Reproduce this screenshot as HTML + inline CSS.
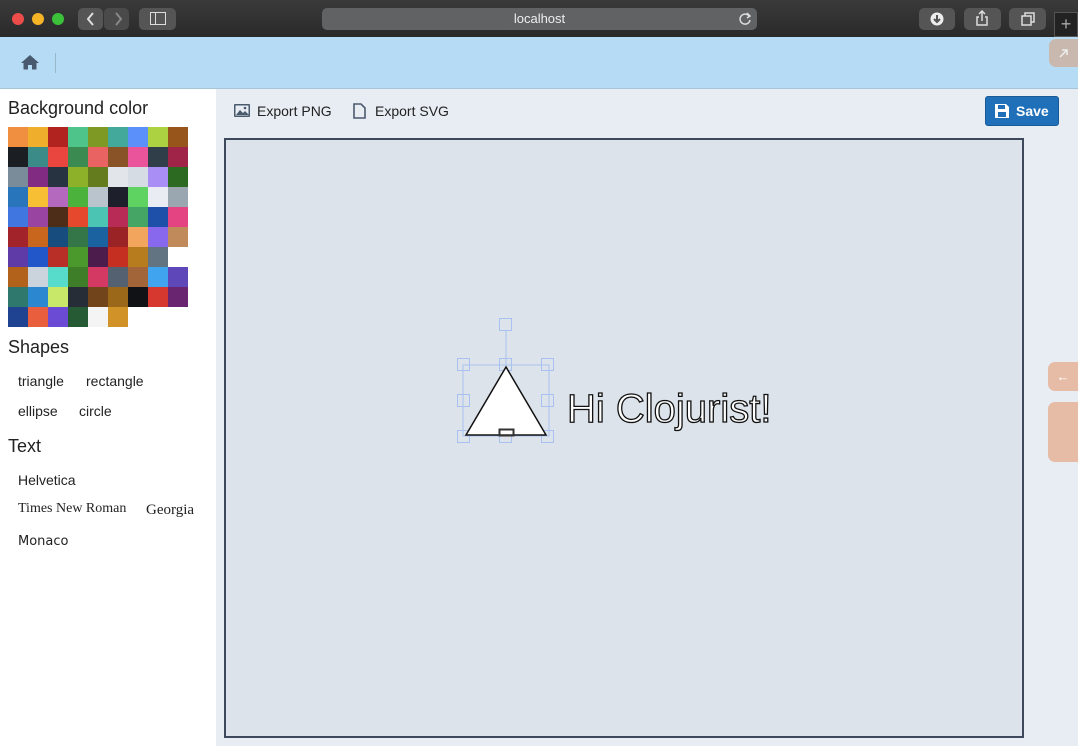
<!DOCTYPE html>
<html><head><meta charset="utf-8"><style>
*{margin:0;padding:0;box-sizing:border-box}
body{width:1078px;height:754px;overflow:hidden;background:#fff;font-family:"Liberation Sans",Helvetica,Arial,sans-serif;position:relative;color:#222}
.abs{position:absolute}
#chrome{left:0;top:0;width:1078px;height:37px;background:linear-gradient(#3a3a3a,#2a2a2a)}
.dot{position:absolute;top:13px;width:12px;height:12px;border-radius:50%}
.btn{position:absolute;top:8px;height:22px;background:#555;border-radius:5px}
#nav{left:0;top:37px;width:1078px;height:52px;background:#b6dcf5;border-bottom:1px solid #a8c4d8}
#side{left:0;top:89px;width:216px;height:657px;background:#fff}
#main{left:216px;top:89px;width:862px;height:657px;background:#e8edf4}
h3{position:absolute;left:8px;font-weight:normal;font-size:18px;color:#222}
.it{position:absolute;font-size:14px;color:#222}
#grid{left:8px;top:127px;width:180px;display:flex;flex-wrap:wrap}
#grid div{width:20px;height:20px}
#canvas{left:224px;top:138px;width:800px;height:600px;background:#dde3ea;border:2px solid #3e4a5c}
</style></head><body>
<div id="chrome" class="abs">
 <div class="dot" style="left:12px;background:#ec4c4a"></div>
 <div class="dot" style="left:32px;background:#f5b326"></div>
 <div class="dot" style="left:52px;background:#3cc23a"></div>
 <div class="btn" style="left:78px;width:25px"></div>
 <div class="btn" style="left:104px;width:25px;background:#4a4a4a"></div>
 <svg class="abs" style="left:78px;top:8px" width="52" height="22"><path d="M15 5l-5 6 5 6" stroke="#ddd" stroke-width="2" fill="none"/><path d="M38 5l5 6-5 6" stroke="#888" stroke-width="2" fill="none"/></svg>
 <div class="btn" style="left:139px;width:37px"></div>
 <svg class="abs" style="left:150px;top:12px" width="16" height="13"><rect x="0.5" y="0.5" width="15" height="12" stroke="#ddd" fill="none"/><line x1="5.5" y1="1" x2="5.5" y2="12" stroke="#ddd"/></svg>
 <div class="btn" style="left:322px;width:435px;background:#616264"></div>
 <div class="abs" style="left:322px;top:11px;width:435px;text-align:center;color:#eee;font-size:13px">localhost</div>
 <svg class="abs" style="left:738px;top:12px" width="14" height="14"><path d="M11 4A5 5 0 1 0 12 8" stroke="#ddd" stroke-width="1.5" fill="none"/><path d="M9 1l3 3-3 2" stroke="#ddd" stroke-width="1.5" fill="none"/></svg>
 <div class="btn" style="left:919px;width:36px"></div>
 <svg class="abs" style="left:930px;top:12px" width="14" height="14"><circle cx="7" cy="7" r="6.5" fill="#eee"/><path d="M7 3v6M4 7l3 3 3-3" stroke="#555" stroke-width="2" fill="none"/></svg>
 <div class="btn" style="left:964px;width:37px"></div>
 <svg class="abs" style="left:975px;top:10px" width="14" height="17"><path d="M7 1v10M4 4l3-3 3 3M4 7H2v8h10V7h-2" stroke="#ddd" stroke-width="1.5" fill="none"/></svg>
 <div class="btn" style="left:1009px;width:37px"></div>
 <svg class="abs" style="left:1021px;top:12px" width="14" height="14"><rect x="1" y="4" width="9" height="9" stroke="#ddd" fill="none" stroke-width="1.5"/><path d="M4 4V1h9v9h-3" stroke="#ddd" fill="none" stroke-width="1.5"/></svg>
 <div class="abs" style="left:1054px;top:12px;width:24px;height:25px;background:#222;border:1px solid #555;color:#aaa;font-size:18px;text-align:center;line-height:22px">+</div>
</div>
<div id="nav" class="abs">
 <svg class="abs" style="left:21px;top:17px" width="18" height="16"><path d="M9 1L0 9h2.5v6.5h4.5v-4.5h4v4.5h4.5V9H18z" fill="#4a5a6e"/></svg>
 <div class="abs" style="left:55px;top:16px;width:1px;height:20px;background:#98b8cc"></div>
 <div class="abs" style="left:1049px;top:2px;width:29px;height:28px;background:#c8b8ad;border-radius:7px 0 0 7px"></div>
 <svg class="abs" style="left:1058px;top:10px" width="12" height="12"><path d="M2 10L9 3M4 3h5v5" stroke="#eee" stroke-width="1.5" fill="none"/></svg>
</div>
<div id="side" class="abs">
 <h3 style="top:9px">Background color</h3>
 <h3 style="top:248px">Shapes</h3>
 <div class="it" style="left:18px;top:284px">triangle</div>
 <div class="it" style="left:86px;top:284px">rectangle</div>
 <div class="it" style="left:18px;top:314px">ellipse</div>
 <div class="it" style="left:79px;top:314px">circle</div>
 <h3 style="top:347px">Text</h3>
 <div class="it" style="left:18px;top:383px">Helvetica</div>
 <div class="it" style="left:18px;top:412px;font-family:'Liberation Serif',serif">Times New Roman</div>
 <div class="it" style="left:146px;top:413px;font-family:'Liberation Serif',serif;font-size:15px">Georgia</div>
 <div class="it" style="left:18px;top:445px;font-family:'DejaVu Sans',sans-serif;font-size:13px">Monaco</div>
</div>
<div id="grid" class="abs">
<div style="background:#ef8f3f"></div><div style="background:#efae2c"></div><div style="background:#b0231f"></div><div style="background:#4fc48a"></div><div style="background:#7e9a25"></div><div style="background:#43a99a"></div><div style="background:#5b8ff9"></div><div style="background:#acd141"></div><div style="background:#97541b"></div>
<div style="background:#1b1e22"></div><div style="background:#3b8b88"></div><div style="background:#e8463f"></div><div style="background:#3b8a52"></div><div style="background:#ea6363"></div><div style="background:#8a5227"></div><div style="background:#e9549a"></div><div style="background:#2f3e48"></div><div style="background:#a02448"></div>
<div style="background:#7a8b9a"></div><div style="background:#812b83"></div><div style="background:#283342"></div><div style="background:#8db22a"></div><div style="background:#647c1e"></div><div style="background:#e2e6ea"></div><div style="background:#d5dce4"></div><div style="background:#a98ff5"></div><div style="background:#2d6a21"></div>
<div style="background:#2875bb"></div><div style="background:#f6bf34"></div><div style="background:#b469bf"></div><div style="background:#4bb33c"></div><div style="background:#b9c4cc"></div><div style="background:#1d202a"></div><div style="background:#5ed362"></div><div style="background:#e9ecf2"></div><div style="background:#9aa7b0"></div>
<div style="background:#3f76e0"></div><div style="background:#9944a0"></div><div style="background:#4e2d18"></div><div style="background:#e5482c"></div><div style="background:#4cc4b3"></div><div style="background:#b82b57"></div><div style="background:#44a565"></div><div style="background:#1e4fa9"></div><div style="background:#e54483"></div>
<div style="background:#a3232a"></div><div style="background:#c8661e"></div><div style="background:#164d7e"></div><div style="background:#347647"></div><div style="background:#1b63a0"></div><div style="background:#9a2425"></div><div style="background:#f2a55d"></div><div style="background:#8868ec"></div><div style="background:#c18a5a"></div>
<div style="background:#5e3ba6"></div><div style="background:#2157c8"></div><div style="background:#b72f26"></div><div style="background:#4b982c"></div><div style="background:#4c1d4c"></div><div style="background:#c52f22"></div><div style="background:#b77c1e"></div><div style="background:#627381"></div><div style="background:#ffffff"></div>
<div style="background:#b2621b"></div><div style="background:#cbd4dc"></div><div style="background:#57dccb"></div><div style="background:#3e7e28"></div><div style="background:#d33963"></div><div style="background:#536170"></div><div style="background:#a2653a"></div><div style="background:#40a5ee"></div><div style="background:#5e47b8"></div>
<div style="background:#2f786d"></div><div style="background:#2a87d0"></div><div style="background:#c7e868"></div><div style="background:#272d37"></div><div style="background:#72441b"></div><div style="background:#9b6819"></div><div style="background:#101216"></div><div style="background:#d63830"></div><div style="background:#6a2570"></div>
<div style="background:#1f4390"></div><div style="background:#e95e3d"></div><div style="background:#6b4bd3"></div><div style="background:#255a35"></div><div style="background:#f4f4f4"></div><div style="background:#d19327"></div>
</div>
<div id="main" class="abs">
 <svg class="abs" style="left:18px;top:15px" width="16" height="13"><rect x="0" y="0" width="16" height="13" rx="1" fill="#4a5a6e"/><rect x="1.5" y="1.5" width="13" height="10" fill="#e8edf4"/><path d="M2 11l4-5 3 3 2-2 4 4z" fill="#4a5a6e"/><circle cx="11" cy="4" r="1.3" fill="#4a5a6e"/></svg>
 <div class="abs" style="left:41px;top:14px;font-size:14px">Export PNG</div>
 <svg class="abs" style="left:137px;top:14px" width="13" height="16"><path d="M1 1h7l4 4v10H1z" stroke="#4a5a6e" stroke-width="1.6" fill="none"/></svg>
 <div class="abs" style="left:159px;top:14px;font-size:14px">Export SVG</div>
 <div class="abs" style="left:769px;top:7px;width:74px;height:30px;background:#1f70b8;border:1px solid #175a96;border-radius:3px"></div>
 <svg class="abs" style="left:778px;top:14px" width="16" height="16"><path d="M1 1h11l3 3v11H1z" fill="#fff"/><rect x="4" y="2" width="7" height="4" fill="#1f70b8"/><rect x="4" y="9" width="8" height="5" fill="#1f70b8"/></svg>
 <div class="abs" style="left:800px;top:14px;font-size:14px;color:#fff;font-weight:bold">Save</div>
 <div class="abs" style="left:832px;top:273px;width:30px;height:29px;background:#e6bca6;border-radius:7px 0 0 7px;color:#fff;font-size:13px;line-height:29px;text-align:center">←</div>
 <div class="abs" style="left:832px;top:313px;width:30px;height:60px;background:#e6bca6;border-radius:7px 0 0 7px"></div>
</div>
<div id="canvas" class="abs"></div>
<svg class="abs" style="left:440px;top:310px" width="340" height="140">
 <g stroke="#a9c1f0" fill="none" stroke-width="1">
  <line x1="66" y1="20" x2="66" y2="55"/>
  <rect x="23" y="55" width="86" height="71"/>
  <rect x="59.5" y="8.5" width="12" height="12"/>
  <rect x="17.5" y="48.5" width="12" height="12"/><rect x="59.5" y="48.5" width="12" height="12"/><rect x="101.5" y="48.5" width="12" height="12"/>
  <rect x="17.5" y="84.5" width="12" height="12"/><rect x="101.5" y="84.5" width="12" height="12"/>
  <rect x="17.5" y="120.5" width="12" height="12"/><rect x="59.5" y="120.5" width="12" height="12"/><rect x="101.5" y="120.5" width="12" height="12"/>
 </g>
 <path d="M66 57L26 125H106Z" fill="#fff" stroke="#111" stroke-width="1.5"/>
 <rect x="59.5" y="119.5" width="14" height="6" fill="none" stroke="#333" stroke-width="2"/>
 <text x="127" y="112" font-family="Liberation Sans,sans-serif" font-size="40" fill="#fff" stroke="#111" stroke-width="1.3">Hi Clojurist!</text>
</svg>
</body></html>
